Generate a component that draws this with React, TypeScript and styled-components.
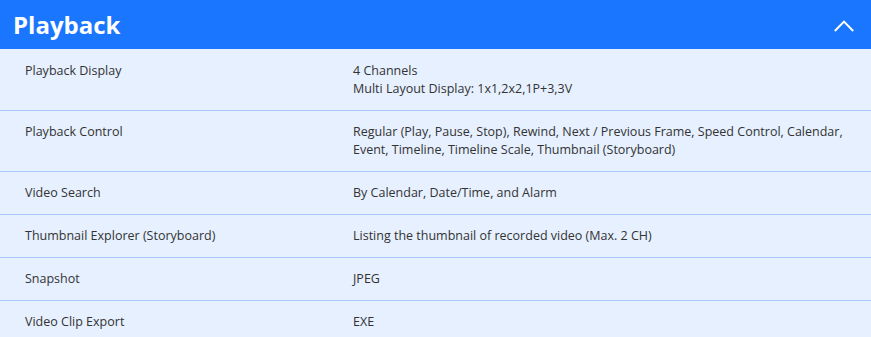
import React from 'react'
import styled, { createGlobalStyle } from 'styled-components'

const GlobalStyle = createGlobalStyle`
  body {
    margin: 0;
    background: #e6f0ff;
    font-family: 'Open Sans', 'Liberation Sans', sans-serif;
  }
`

const Panel = styled.section`
  width: 871px;
  background: #e6f0ff;
`

const Header = styled.header`
  height: 49px;
  background: #1a75ff;
  display: flex;
  align-items: center;
  justify-content: space-between;
  padding: 0 17px 0 13px;
  box-sizing: border-box;
`

const Title = styled.h2`
  margin: 0;
  color: #fff;
  font-size: 24px;
  font-weight: 700;
  line-height: 1;
`

const Toggle = styled.button`
  border: 0;
  background: none;
  padding: 0;
  width: 20px;
  height: 12px;
  display: flex;
  align-items: center;
  justify-content: center;
  margin-top: 2px;
  cursor: pointer;
`

const Body = styled.div`
  padding-top: 1px;
`

const Row = styled.div`
  display: grid;
  grid-template-columns: 353px 1fr;
  border-bottom: 1px solid #a9c9ff;
  font-size: 12.5px;
  line-height: 18px;
  color: #333;
`

const Cell = styled.div<{ $label?: boolean }>`
  padding: 12px ${p => (p.$label ? '16px' : '20px')} 12px ${p => (p.$label ? '25px' : '0')};
`

interface ISpec {
  label: string
  value: string[]
}

const specs: ISpec[] = [
  { label: 'Playback Display', value: ['4 Channels', 'Multi Layout Display: 1x1,2x2,1P+3,3V'] },
  {
    label: 'Playback Control',
    value: [
      'Regular (Play, Pause, Stop), Rewind, Next / Previous Frame, Speed Control, Calendar, Event, Timeline, Timeline Scale, Thumbnail (Storyboard)',
    ],
  },
  { label: 'Video Search', value: ['By Calendar, Date/Time, and Alarm'] },
  { label: 'Thumbnail Explorer (Storyboard)', value: ['Listing the thumbnail of recorded video (Max. 2 CH)'] },
  { label: 'Snapshot', value: ['JPEG'] },
  { label: 'Video Clip Export', value: ['EXE'] },
]

const App: React.FC = () => {
  return (
    <Panel>
      <GlobalStyle />
      <Header>
        <Title>Playback</Title>
        <Toggle aria-label='Collapse'>
          <svg width='20' height='12' viewBox='0 0 20 12'>
            <path d='M0.8 11 L10 1.6 L19.2 11' fill='none' stroke='#fff' strokeWidth='2' />
          </svg>
        </Toggle>
      </Header>
      <Body>
        {specs.map(s => (
          <Row key={s.label}>
            <Cell $label>{s.label}</Cell>
            <Cell>
              {s.value.map(v => (
                <div key={v}>{v}</div>
              ))}
            </Cell>
          </Row>
        ))}
      </Body>
    </Panel>
  )
}

export default App
